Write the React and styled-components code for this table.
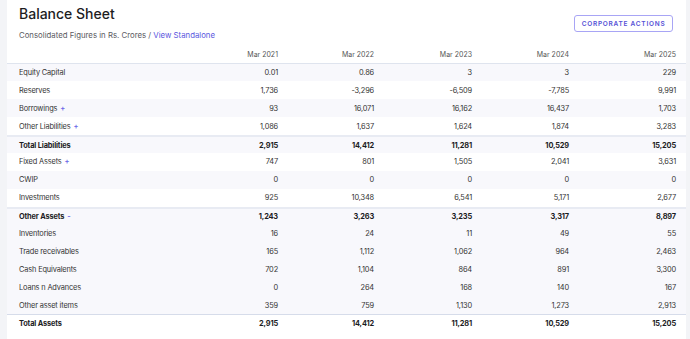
import React from 'react';
import styled, { createGlobalStyle } from 'styled-components';

const GlobalStyle = createGlobalStyle`
  body {
    margin: 0;
    background: #f3f4f7;
    font-family: Inter, "Noto Sans", sans-serif;
    color: #333333;
  }
`;

const Page = styled.div`
  padding: 0 4px 0 7px;
`;

const Card = styled.section`
  background: #ffffff;
  padding-top: 5px;
  padding-bottom: 7px;
`;

const Head = styled.div`
  display: flex;
  justify-content: space-between;
  align-items: flex-start;
  padding: 0 13px 0 12px;
`;

const Title = styled.h2`
  margin: 0;
  font-size: 14px;
  line-height: 18px;
  font-weight: 500;
  color: #1d1d1f;
`;

const Sub = styled.div`
  margin-top: 5.5px;
  font-size: 7.8px;
  line-height: 12px;
  color: #5a5a5f;

  a {
    color: #5b57e0;
    text-decoration: none;
  }
`;

const ActionButton = styled.button`
  margin-top: 10px;
  width: 99px;
  height: 17px;
  padding: 0;
  border: 1px solid #a8a5f5;
  border-radius: 3px;
  background: #ffffff;
  color: #5551d6;
  font-family: Inter, sans-serif;
  font-size: 6.5px;
  font-weight: 600;
  letter-spacing: 0.75px;
`;

const Grid = styled.div`
  display: grid;
  grid-template-columns: 1fr 99px 96px 98px 97px 107px;
  align-items: center;
`;

const HeadRow = styled(Grid)`
  padding: 9px 0 3px;
  border-bottom: 1px solid #dfe4ee;
  font-size: 7px;
  line-height: 10px;
  color: #555555;
`;

const Row = styled(Grid)`
  height: ${p => (p.$line ? 17.9 - p.$line : 17.9)}px;
  background: ${p => (p.$shade ? '#f8f8fc' : '#ffffff')};
  border-top: ${p => (p.$line ? `${p.$line}px solid ${p.$line > 1 ? '#e8ebf3' : '#d6dcea'}` : 'none')};
  box-sizing: content-box;
  font-size: 7.4px;
  letter-spacing: -0.15px;
  font-weight: ${p => (p.$bold ? 700 : 400)};
  color: ${p => (p.$bold ? '#1d1d1f' : '#333333')};
`;

const Label = styled.div`
  padding-left: 12px;
`;

const Num = styled.div`
  text-align: right;
  padding-right: 10px;
`;

const Toggle = styled.span`
  margin-left: 3px;
  color: #6a66e8;
  font-weight: 600;
`;

const years = ['Mar 2021', 'Mar 2022', 'Mar 2023', 'Mar 2024', 'Mar 2025'];

const rows = [
  { name: 'Equity Capital', v: ['0.01', '0.86', '3', '3', '229'], shade: true },
  { name: 'Reserves', v: ['1,736', '-3,296', '-6,509', '-7,785', '9,991'] },
  { name: 'Borrowings', toggle: '+', v: ['93', '16,071', '16,162', '16,437', '1,703'], shade: true },
  { name: 'Other Liabilities', toggle: '+', v: ['1,086', '1,637', '1,624', '1,874', '3,283'] },
  { name: 'Total Liabilities', v: ['2,915', '14,412', '11,281', '10,529', '15,205'], bold: true, shade: true, line: 2 },
  { name: 'Fixed Assets', toggle: '+', v: ['747', '801', '1,505', '2,041', '3,631'] },
  { name: 'CWIP', v: ['0', '0', '0', '0', '0'], shade: true },
  { name: 'Investments', v: ['925', '10,348', '6,541', '5,171', '2,677'] },
  { name: 'Other Assets', toggle: '-', v: ['1,243', '3,263', '3,235', '3,317', '8,897'], bold: true, shade: true, line: 2 },
  { name: 'Inventories', v: ['16', '24', '11', '49', '55'], shade: true },
  { name: 'Trade receivables', v: ['165', '1,112', '1,062', '964', '2,463'], shade: true },
  { name: 'Cash Equivalents', v: ['702', '1,104', '864', '891', '3,300'], shade: true },
  { name: 'Loans n Advances', v: ['0', '264', '168', '140', '167'], shade: true },
  { name: 'Other asset items', v: ['359', '759', '1,130', '1,273', '2,913'], shade: true },
  { name: 'Total Assets', v: ['2,915', '14,412', '11,281', '10,529', '15,205'], bold: true, line: 1 },
];

const App = () => {
  return (
    <Page>
      <GlobalStyle />
      <Card>
        <Head>
          <div>
            <Title>Balance Sheet</Title>
            <Sub>
              Consolidated Figures in Rs. Crores / <a href="#">View Standalone</a>
            </Sub>
          </div>
          <ActionButton>CORPORATE ACTIONS</ActionButton>
        </Head>
        <HeadRow>
          <Label />
          {years.map(y => <Num key={y}>{y}</Num>)}
        </HeadRow>
        {rows.map(r => (
          <Row key={r.name} $shade={r.shade} $bold={r.bold} $line={r.line}>
            <Label>
              {r.name}
              {r.toggle && <Toggle>{r.toggle}</Toggle>}
            </Label>
            {r.v.map((n, i) => <Num key={i}>{n}</Num>)}
          </Row>
        ))}
      </Card>
    </Page>
  );
};

export default App;
